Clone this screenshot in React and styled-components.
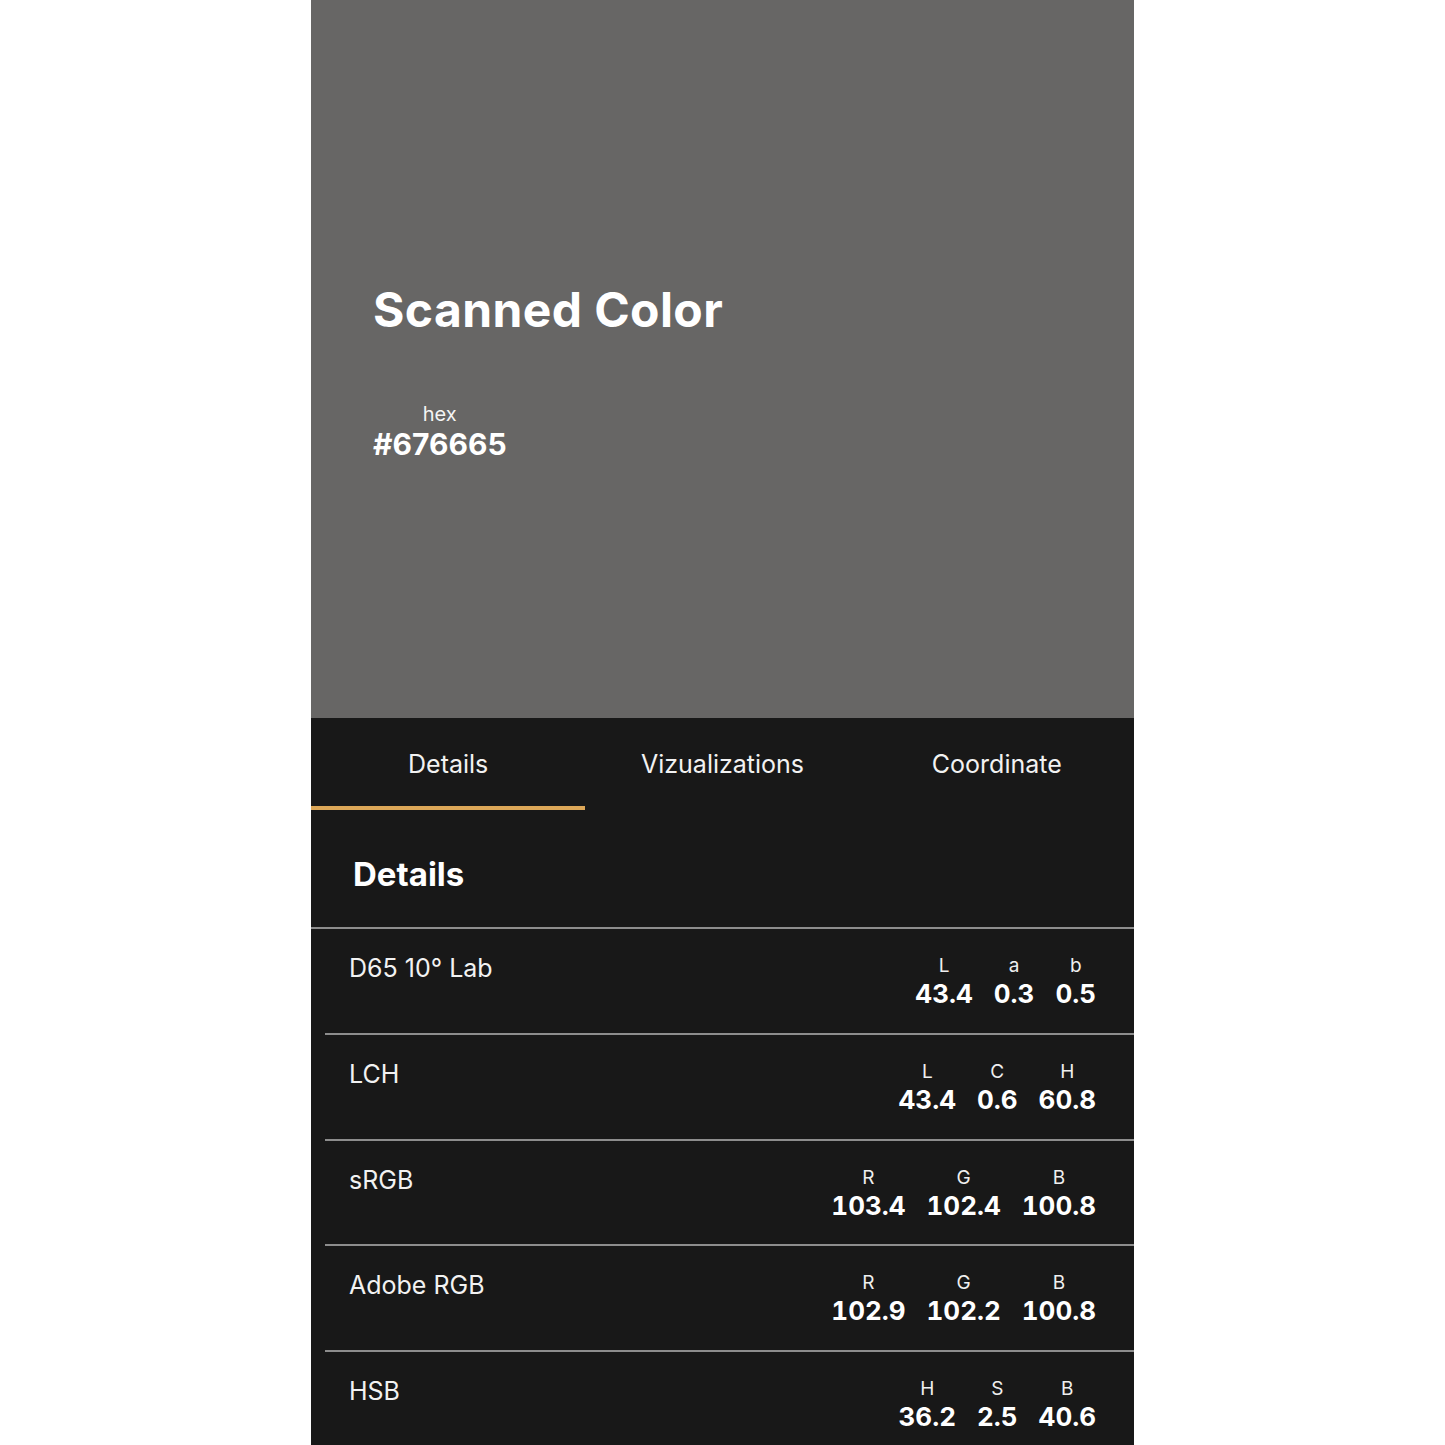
import React from 'react';
import styled, { createGlobalStyle } from 'styled-components';

const GlobalStyle = createGlobalStyle`
  * { box-sizing: border-box; }
  body {
    margin: 0;
    background: #fff;
    font-family: Inter, "Noto Sans", "Liberation Sans", sans-serif;
  }
`;

const tabs = ['Details', 'Vizualizations', 'Coordinate'];

const spaces = [
  { name: 'D65 10° Lab', items: [['L', '43.4'], ['a', '0.3'], ['b', '0.5']] },
  { name: 'LCH', items: [['L', '43.4'], ['C', '0.6'], ['H', '60.8']] },
  { name: 'sRGB', items: [['R', '103.4'], ['G', '102.4'], ['B', '100.8']] },
  { name: 'Adobe RGB', items: [['R', '102.9'], ['G', '102.2'], ['B', '100.8']] },
  { name: 'HSB', items: [['H', '36.2'], ['S', '2.5'], ['B', '40.6']] },
];

function App() {
  return (
    <>
      <GlobalStyle />
      <Screen>
        {/* scanned colour swatch */}
        <Hero $color="#676665">
          <HeroTitle>Scanned Color</HeroTitle>
          <HexBlock>
            <HexLabel>hex</HexLabel>
            <HexValue>#676665</HexValue>
          </HexBlock>
        </Hero>

        {/* tabs */}
        <TabBar>
          {tabs.map((t, i) => (
            <Tab key={t} $active={i === 0}>{t}</Tab>
          ))}
        </TabBar>

        {/* details list */}
        <SectionHead>
          <SectionTitle>Details</SectionTitle>
        </SectionHead>
        {spaces.map((s) => (
          <Row key={s.name}>
            <RowTitle>{s.name}</RowTitle>
            <Values>
              {s.items.map(([label, value]) => (
                <ValueCol key={label}>
                  <ValueLabel>{label}</ValueLabel>
                  <ValueNumber>{value}</ValueNumber>
                </ValueCol>
              ))}
            </Values>
          </Row>
        ))}
      </Screen>
    </>
  );
}

const Screen = styled.div`
  width: 823px;
  height: 1445px;
  margin: 0 auto;
  background: #181818;
  overflow: hidden;
  color: #fff;
`;

const Hero = styled.section`
  height: 718px;
  background: ${(p) => p.$color};
  padding: 281px 0 0 62px;
  display: flex;
  flex-direction: column;
  align-items: flex-start;
`;

const HeroTitle = styled.h1`
  margin: 0;
  font-size: 48px;
  line-height: 58px;
  font-weight: 700;
  letter-spacing: 0.4px;
  color: #fff;
`;

const HexBlock = styled.div`
  margin-top: 63px;
  display: flex;
  flex-direction: column;
  align-items: center;
`;

const HexLabel = styled.span`
  font-size: 20px;
  line-height: 24px;
  font-weight: 400;
  color: #f4f4f4;
`;

const HexValue = styled.span`
  font-size: 30px;
  line-height: 36px;
  font-weight: 700;
  color: #fff;
`;

const TabBar = styled.nav`
  display: grid;
  grid-template-columns: repeat(3, 1fr);
  height: 92px;
`;

const Tab = styled.div`
  display: flex;
  align-items: center;
  justify-content: center;
  padding-top: 4px;
  font-size: 25px;
  font-weight: 400;
  color: #f2f2f2;
  border-bottom: 4px solid ${(p) => (p.$active ? '#dca758' : 'transparent')};
`;

const SectionHead = styled.div`
  height: 119px;
  padding: 10px 0 0 42px;
  display: flex;
  align-items: center;
  border-bottom: 2px solid #8d8d8d;
`;

const SectionTitle = styled.h2`
  margin: 0;
  font-size: 33px;
  font-weight: 700;
  color: #fff;
`;

const Row = styled.div`
  height: 105.75px;
  margin-left: 14px;
  padding: 25px 38px 0 24px;
  display: flex;
  justify-content: space-between;
  align-items: flex-start;
  border-bottom: 2px solid #8d8d8d;
`;

const RowTitle = styled.span`
  font-size: 25px;
  line-height: 29px;
  font-weight: 400;
  color: #f2f2f2;
`;

const Values = styled.div`
  display: flex;
  gap: 21px;
  padding-top: 1px;
`;

const ValueCol = styled.div`
  display: flex;
  flex-direction: column;
  align-items: center;
`;

const ValueLabel = styled.span`
  font-size: 19px;
  line-height: 22px;
  font-weight: 400;
  color: #efefef;
`;

const ValueNumber = styled.span`
  margin-top: 2px;
  font-size: 26px;
  line-height: 30px;
  font-weight: 700;
  font-variant-numeric: tabular-nums;
  color: #fff;
`;

export default App;
